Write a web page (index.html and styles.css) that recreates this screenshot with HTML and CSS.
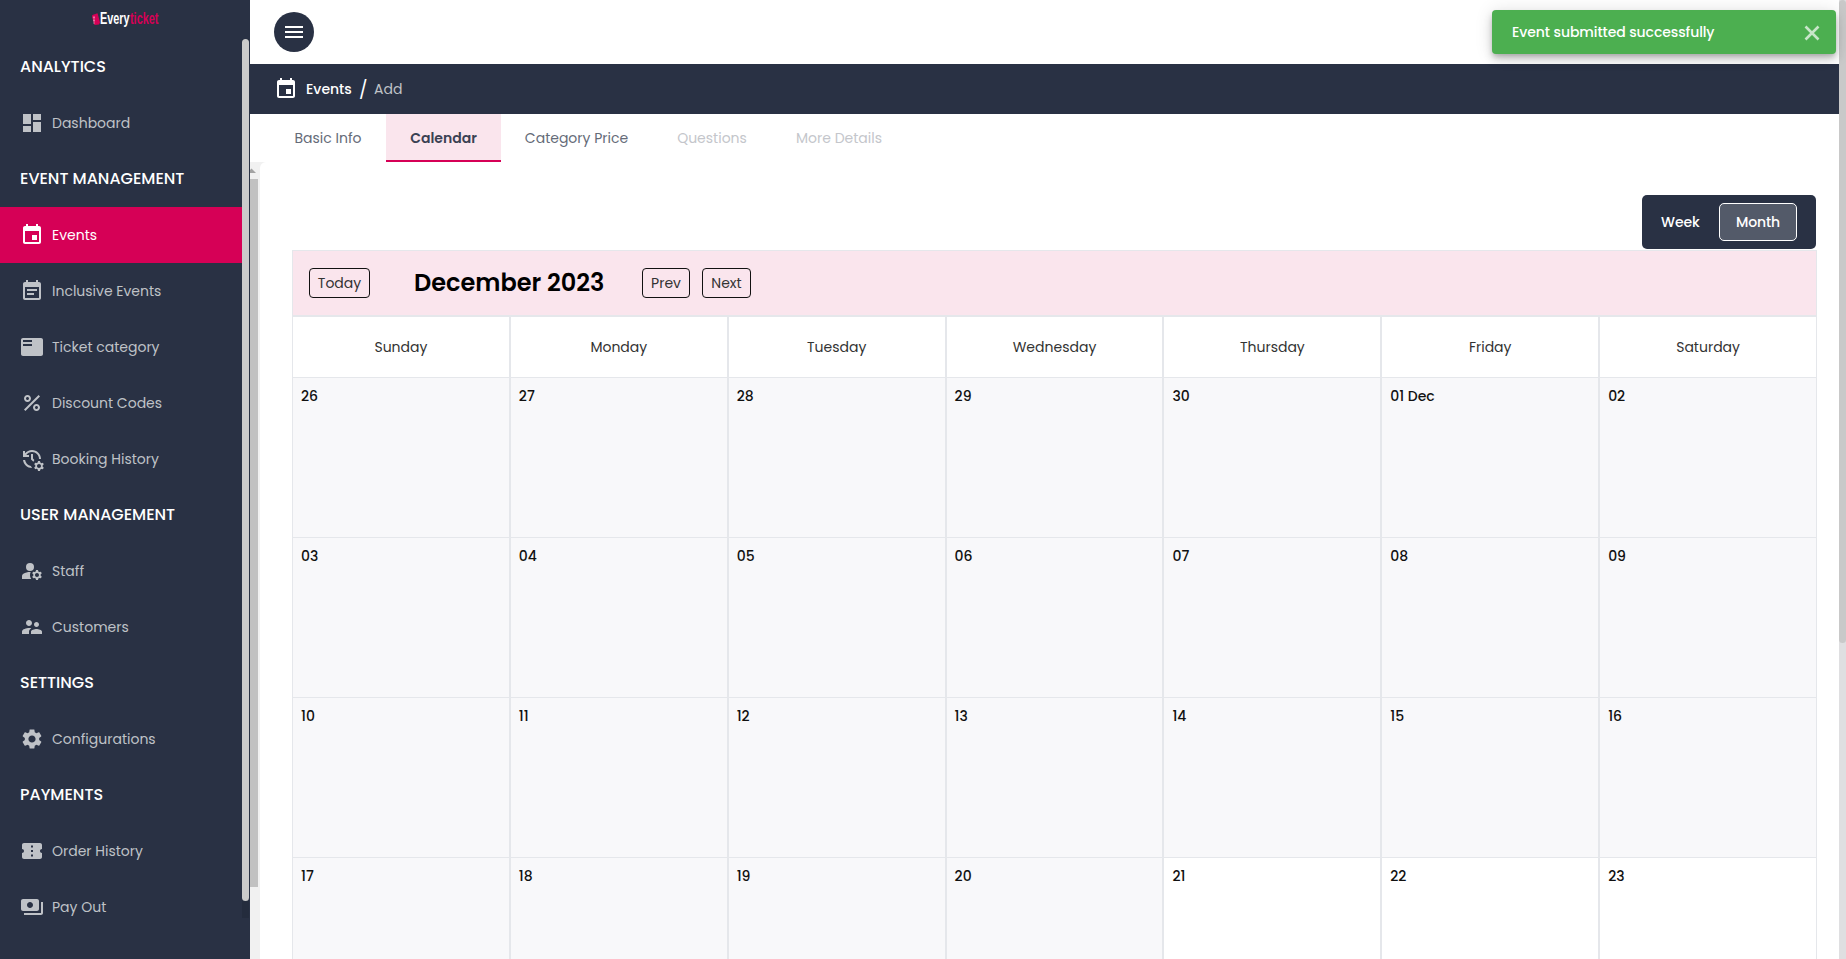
FILE: index.html
```html
<!DOCTYPE html>
<html lang="en">
<head>
<meta charset="utf-8">
<title>Everyticket - Add Event</title>
<link rel="stylesheet" href="styles.css">
</head>
<body>
<div class="app">
  <aside class="sidebar">
    <div class="logo">
      <svg class="logo-mark" viewBox="0 0 8 12"><path fill="#d60056" d="M.3 2 5.500.3 6.300 3 8 9.500 7 11.500 2.500 12 1.500 8.500 0 4z"/><path stroke="#fff" stroke-width=".9" stroke-dasharray="2 1" d="M2 3.500v7" /></svg>
      <span class="logo-a">Every</span><span class="logo-b">ticket</span>
    </div>
    <div class="menu-wrap">
      <nav class="menu">
        <h2 class="group">ANALYTICS</h2>
        <a class="item"><svg class="icon" viewBox="0 0 24 24"><path d="M3 13h8V3H3v10zm0 8h8v-6H3v6zm10 0h8V11h-8v10zm0-18v6h8V3h-8z"/></svg><span>Dashboard</span></a>
        <h2 class="group">EVENT MANAGEMENT</h2>
        <a class="item active"><svg class="icon" viewBox="0 0 24 24"><path d="M17 12h-5v5h5v-5zM16 1v2H8V1H6v2H5c-1.110 0-1.990.9-1.990 2L3 19c0 1.100.89 2 2 2h14c1.100 0 2-.9 2-2V5c0-1.100-.9-2-2-2h-1V1h-2zm3 18H5V8h14v11z"/></svg><span>Events</span></a>
        <a class="item"><svg class="icon" viewBox="0 0 24 24"><path d="M17 10H7v2h10v-2zm2-7h-1V1h-2v2H8V1H6v2H5c-1.110 0-1.990.9-1.990 2L3 19c0 1.100.89 2 2 2h14c1.100 0 2-.9 2-2V5c0-1.100-.9-2-2-2zm0 16H5V8h14v11zm-5-5H7v2h7v-2z"/></svg><span>Inclusive Events</span></a>
        <a class="item"><svg class="icon" viewBox="0 0 24 24"><path d="M21 3H3c-1.100 0-2 .9-2 2v14c0 1.100.9 2 2 2h18c1.100 0 2-.9 2-2V5c0-1.100-.9-2-2-2zm-9 8H3V9h9v2zm0-4H3V5h9v2z"/></svg><span>Ticket category</span></a>
        <a class="item"><svg class="icon" viewBox="0 0 24 24"><path d="M7.500 11C9.430 11 11 9.430 11 7.500S9.430 4 7.500 4 4 5.570 4 7.500 5.570 11 7.500 11zm0-5C8.330 6 9 6.670 9 7.500S8.330 9 7.500 9 6 8.330 6 7.500 6.670 6 7.500 6zM4 18.580 18.580 4 20 5.420 5.420 20zM16.500 13c-1.930 0-3.500 1.570-3.500 3.500s1.570 3.500 3.500 3.500 3.500-1.570 3.500-3.500-1.570-3.500-3.500-3.500zm0 5c-.83 0-1.500-.67-1.500-1.500s.67-1.500 1.500-1.500 1.500.67 1.500 1.500-.67 1.500-1.500 1.500z"/></svg><span>Discount Codes</span></a>
        <a class="item"><svg class="icon" viewBox="0 0 24 24"><path d="M22.690 18.370l1.140-1-1-1.730-1.450.49c-.32-.27-.68-.48-1.080-.63L20 14h-2l-.3 1.490c-.4.15-.76.36-1.080.63l-1.450-.49-1 1.730 1.140 1c-.08.5-.08.76 0 1.260l-1.140 1 1 1.730 1.450-.49c.32.27.68.48 1.080.63L18 24h2l.3-1.490c.4-.15.76-.36 1.080-.63l1.450.49 1-1.730-1.140-1c.08-.51.08-.77 0-1.270zM19 21c-1.100 0-2-.9-2-2s.9-2 2-2 2 .9 2 2-.9 2-2 2zM11 7v5.410l2.360 2.360 1.040-1.790-1.400-1.390V7h-2zm10 5c0-4.970-4.030-9-9-9-2.830 0-5.350 1.320-7 3.360V4H3v6h6V8H6.260C7.530 6.190 9.630 5 12 5c3.860 0 7 3.140 7 7h2zm-10.140 6.910c-2.990-.49-5.350-2.900-5.780-5.910H3.060c.5 4.500 4.310 8 8.940 8h.07l-1.210-2.090z"/></svg><span>Booking History</span></a>
        <h2 class="group">USER MANAGEMENT</h2>
        <a class="item"><svg class="icon" viewBox="0 0 24 24"><circle cx="10" cy="8" r="4"/><path d="M10.670 13.020C10.450 13.010 10.230 13 10 13c-2.420 0-4.680.67-6.610 1.820-.88.52-1.390 1.500-1.390 2.530V20h9.260c-.79-1.130-1.260-2.510-1.260-4 0-1.070.25-2.070.67-2.980zM20.750 16c0-.22-.03-.42-.06-.63l1.140-1.010-1-1.730-1.450.49c-.32-.27-.68-.48-1.080-.63L18 11h-2l-.3 1.490c-.4.15-.76.36-1.080.63l-1.450-.49-1 1.730 1.140 1.010c-.03.21-.06.41-.06.63s.03.42.06.63l-1.140 1.010 1 1.730 1.450-.49c.32.27.68.48 1.080.63L16 21h2l.3-1.490c.4-.15.76-.36 1.080-.63l1.450.49 1-1.730-1.140-1.010c.03-.21.06-.41.06-.63zM17 18c-1.100 0-2-.9-2-2s.9-2 2-2 2 .9 2 2-.9 2-2 2z"/></svg><span>Staff</span></a>
        <a class="item"><svg class="icon" viewBox="0 0 24 24"><path d="M16.500 12c1.380 0 2.490-1.120 2.490-2.500S17.880 7 16.500 7 14 8.120 14 9.500s1.120 2.500 2.500 2.500zM9 11c1.660 0 2.990-1.340 2.990-3S10.660 5 9 5 6 6.340 6 8s1.340 3 3 3zm7.500 3c-1.830 0-5.500.92-5.500 2.750V19h11v-2.250c0-1.830-3.670-2.750-5.500-2.750zM9 13c-2.330 0-7 1.170-7 3.500V19h7v-2.250c0-.85.33-2.340 2.370-3.470C10.500 13.100 9.660 13 9 13z"/></svg><span>Customers</span></a>
        <h2 class="group">SETTINGS</h2>
        <a class="item"><svg class="icon" viewBox="0 0 24 24"><path d="M19.140 12.940c.04-.3.06-.61.06-.94 0-.32-.02-.64-.07-.94l2.030-1.580c.18-.14.23-.41.12-.61l-1.920-3.320c-.12-.22-.37-.29-.59-.22l-2.390.96c-.5-.38-1.030-.7-1.620-.94l-.36-2.540c-.04-.24-.24-.41-.48-.41h-3.840c-.24 0-.43.17-.47.41l-.36 2.540c-.59.24-1.130.57-1.620.94l-2.390-.96c-.22-.08-.47 0-.59.22L2.740 8.870c-.12.21-.08.47.12.61l2.030 1.580c-.05.3-.09.63-.09.94s.02.64.07.94l-2.030 1.580c-.18.14-.23.41-.12.61l1.920 3.320c.12.22.37.29.59.22l2.390-.96c.5.38 1.030.7 1.620.94l.36 2.540c.05.24.24.41.48.41h3.840c.24 0 .44-.17.47-.41l.36-2.540c.59-.24 1.130-.56 1.620-.94l2.390.96c.22.08.47 0 .59-.22l1.920-3.320c.12-.22.07-.47-.12-.61l-2.010-1.580zM12 15.600c-1.980 0-3.600-1.620-3.600-3.600s1.620-3.600 3.600-3.600 3.600 1.620 3.600 3.600-1.620 3.600-3.600 3.600z"/></svg><span>Configurations</span></a>
        <h2 class="group">PAYMENTS</h2>
        <a class="item"><svg class="icon" viewBox="0 0 24 24"><path d="M22 10V6c0-1.110-.9-2-2-2H4c-1.100 0-1.990.89-1.990 2v4c1.100 0 1.990.9 1.990 2s-.89 2-2 2v4c0 1.100.9 2 2 2h16c1.100 0 2-.9 2-2v-4c-1.100 0-2-.9-2-2s.9-2 2-2zm-9 7.500h-2v-2h2v2zm0-4.500h-2v-2h2v2zm0-4.500h-2v-2h2v2z"/></svg><span>Order History</span></a>
        <a class="item"><svg class="icon" viewBox="0 0 24 24"><path d="M19 14V6c0-1.100-.9-2-2-2H3c-1.100 0-2 .9-2 2v8c0 1.100.9 2 2 2h14c1.100 0 2-.9 2-2zm-9-1c-1.660 0-3-1.340-3-3s1.340-3 3-3 3 1.340 3 3-1.340 3-3 3zm13-6v11c0 1.100-.9 2-2 2H4v-2h17V7h2z"/></svg><span>Pay Out</span></a>
      </nav>
      <div class="menu-scroll"><div class="menu-thumb"></div></div>
    </div>
  </aside>
  <main class="main">
    <header class="topbar"><button class="burger"><svg class="icon" viewBox="0 0 24 24"><path d="M3 18h18v-2H3v2zm0-5h18v-2H3v2zm0-7v2h18V6H3z"/></svg></button></header>
    <div class="crumbs">
      <svg class="icon" viewBox="0 0 24 24"><path d="M17 12h-5v5h5v-5zM16 1v2H8V1H6v2H5c-1.110 0-1.990.9-1.990 2L3 19c0 1.100.89 2 2 2h14c1.100 0 2-.9 2-2V5c0-1.100-.9-2-2-2h-1V1h-2zm3 18H5V8h14v11z"/></svg>
      <span class="crumb-root">Events</span><span class="crumb-sep">/</span><span class="crumb-leaf">Add</span>
    </div>
    <div class="tabs">
      <div class="tab t-basic">Basic Info</div>
      <div class="tab t-cal selected">Calendar</div>
      <div class="tab t-price">Category Price</div>
      <div class="tab t-quest disabled">Questions</div>
      <div class="tab t-more disabled">More Details</div>
    </div>
    <div class="pane">
      <div class="pane-scroll"><svg class="pane-arrow" viewBox="0 0 8 17"><path d="M-3 11 1.500 6.500 6 11z"/></svg><div class="pane-thumb"></div></div>
      <section class="content">
        <div class="switch"><span class="sw-week">Week</span><span class="sw-month">Month</span></div>
        <div class="calendar">
          <div class="cal-bar"><button class="cal-btn b-today">Today</button><h1 class="cal-title">December 2023</h1><button class="cal-btn b-prev">Prev</button><button class="cal-btn b-next">Next</button></div>
          <div class="days">
            <div class="day">Sunday</div><div class="day">Monday</div><div class="day">Tuesday</div><div class="day">Wednesday</div><div class="day">Thursday</div><div class="day">Friday</div><div class="day">Saturday</div>
          </div>
          <div class="grid">
            <div class="cell past">26</div><div class="cell past">27</div><div class="cell past">28</div><div class="cell past">29</div><div class="cell past">30</div><div class="cell past">01 Dec</div><div class="cell past">02</div>
            <div class="cell past">03</div><div class="cell past">04</div><div class="cell past">05</div><div class="cell past">06</div><div class="cell past">07</div><div class="cell past">08</div><div class="cell past">09</div>
            <div class="cell past">10</div><div class="cell past">11</div><div class="cell past">12</div><div class="cell past">13</div><div class="cell past">14</div><div class="cell past">15</div><div class="cell past">16</div>
            <div class="cell past">17</div><div class="cell past">18</div><div class="cell past">19</div><div class="cell past">20</div><div class="cell">21</div><div class="cell">22</div><div class="cell">23</div>
          </div>
        </div>
      </section>
    </div>
  </main>
  <div class="page-scroll"><div class="page-thumb"></div></div>
</div>
<div class="toast"><span>Event submitted successfully</span><svg class="toast-close" viewBox="0 0 16 16"><path d="M1.500 1.500 14.500 14.500M14.500 1.500 1.500 14.500"/></svg></div>
</body>
</html>
```

FILE: styles.css
```css
* { box-sizing: border-box; }
body {
  margin: 0;
  overflow: hidden;
  background: #fff;
  font-family: Poppins, Inter, "Open Sans", sans-serif;
  font-size: 14px;
}
button { font: inherit; padding: 0; }
.icon { width: 24px; height: 24px; fill: currentColor; flex: none; }
.app { display: flex; width: 1846px; height: 959px; overflow: hidden; }

.sidebar { flex: none; width: 250px; background: #293144; color: #fff; }
.logo {
  display: flex;
  align-items: center;
  height: 39px;
  padding: 0 0 2px 92px;
  font: 700 16px "Liberation Sans", sans-serif;
}
.logo-mark { width: 8px; height: 12px; }
.logo-a, .logo-b { display: block; transform: scaleX(.68); transform-origin: 0 50%; }
.logo-a { width: 30px; }
.logo-b { color: #d60056; }
.menu-wrap { display: flex; height: 879px; overflow: hidden; }
.menu { width: 242px; }
.group, .item { display: flex; align-items: center; height: 56px; margin: 0; }
.group { padding: 0 0 2px 20px; font-size: 16px; font-weight: 500; }
.item { gap: 8px; padding-left: 20px; color: #bfc2c7; }
.item.active { background: #d60056; color: #fff; }
.menu-scroll { width: 7px; background: #242c3d; }
.menu-thumb { height: 862px; border-radius: 4px; background: #cbcbcb; }

.main { flex: none; width: 1589px; display: flex; flex-direction: column; }
.topbar { display: flex; align-items: center; height: 64px; padding-left: 24px; flex: none; }
.burger { display: grid; place-items: center; width: 40px; height: 40px; border: 0; border-radius: 50%; background: #293144; color: #fff; }
.crumbs { display: flex; align-items: center; height: 50px; padding: 0 24px; flex: none; background: #293144; color: #fff; }
.crumb-root { margin-left: 8px; width: 53px; font-weight: 500; }
.crumb-sep { width: 15px; font-size: 18px; }
.crumb-leaf { color: #bfc2c7; }

.tabs { display: flex; flex: none; height: 48px; padding-left: 20px; color: #656b78; }
.tab { display: grid; place-items: center; padding-top: 1px; }
.selected { background: #fae5ed; border-bottom: 2px solid #d60056; color: #3a4153; font-weight: 600; padding-top: 3px; }
.disabled { color: #c4c6cb; }
.t-basic { width: 116px; }
.t-cal { width: 115px; }
.t-price { width: 151px; }
.t-quest { width: 120px; }
.t-more { width: 134px; }

.pane { display: flex; flex: 1; min-height: 0; background: #f1f1f1; }
.pane-scroll { width: 10px; }
.pane-arrow { display: block; width: 8px; height: 17px; fill: #a3a3a3; }
.pane-thumb { width: 8px; height: 708px; background: #c1c1c1; }
.content { flex: 1; padding: 33px 22px 0 32px; background: #fff; border-top-left-radius: 6px; overflow: hidden; }
.switch {
  display: flex;
  align-items: center;
  width: 174px;
  height: 54px;
  margin: 0 1px 1px auto;
  padding-left: 19px;
  border-radius: 5px;
  background: #293144;
  color: #fff;
  font-weight: 500;
  letter-spacing: -.1px;
}
.sw-week { width: 58px; }
.sw-month { display: grid; place-items: center; width: 78px; height: 38px; border: 1px solid #fff; border-radius: 5px; background: #535a69; }
.calendar { border: 1px solid #e5e7eb; border-width: 1px 0 0; }
.cal-bar {
  display: flex;
  align-items: center;
  height: 65px;
  padding-left: 16px;
  border: 1px solid #e5e7eb;
  border-top: 0;
  background: #fae5ed;
}
.cal-btn { height: 30px; border: 1px solid #111; border-radius: 4px; background: none; color: #333; }
.b-today { width: 61px; }
.b-prev { width: 48px; }
.b-next { width: 49px; margin-left: 12px; }
.cal-title { width: 228px; margin: 0 0 1px 44px; font-size: 24px; font-weight: 600; color: #000; white-space: nowrap; }
.days, .grid { display: grid; grid-template-columns: repeat(7, 1fr); }
.day { display: grid; place-items: center; height: 62px; border: 1px solid #e5e7eb; color: #333; }
.cell { height: 160px; padding: 8px; border: 1px solid #e5e7eb; border-top: 0; color: #111; font-weight: 500; line-height: 20px; }
.past { background: #f8f8fa; }

.page-scroll { flex: 1; background: #dfdfe1; }
.page-thumb { height: 643px; border-radius: 4px; background: #c9c9c9; }
.toast {
  position: absolute;
  left: 1492px;
  top: 10px;
  display: flex;
  align-items: center;
  justify-content: space-between;
  width: 344px;
  height: 44px;
  padding: 0 16px 0 20px;
  border-radius: 4px;
  background: #4caf50;
  box-shadow: 0 3px 5px -1px rgba(0, 0, 0, .2), 0 6px 10px rgba(0, 0, 0, .14), 0 1px 18px rgba(0, 0, 0, .12);
  color: #fff;
  font-weight: 500;
  letter-spacing: -.08px;
}
.toast-close { width: 16px; height: 16px; margin-top: 2px; fill: none; stroke: #c8e6c9; stroke-width: 2.600; }
```
